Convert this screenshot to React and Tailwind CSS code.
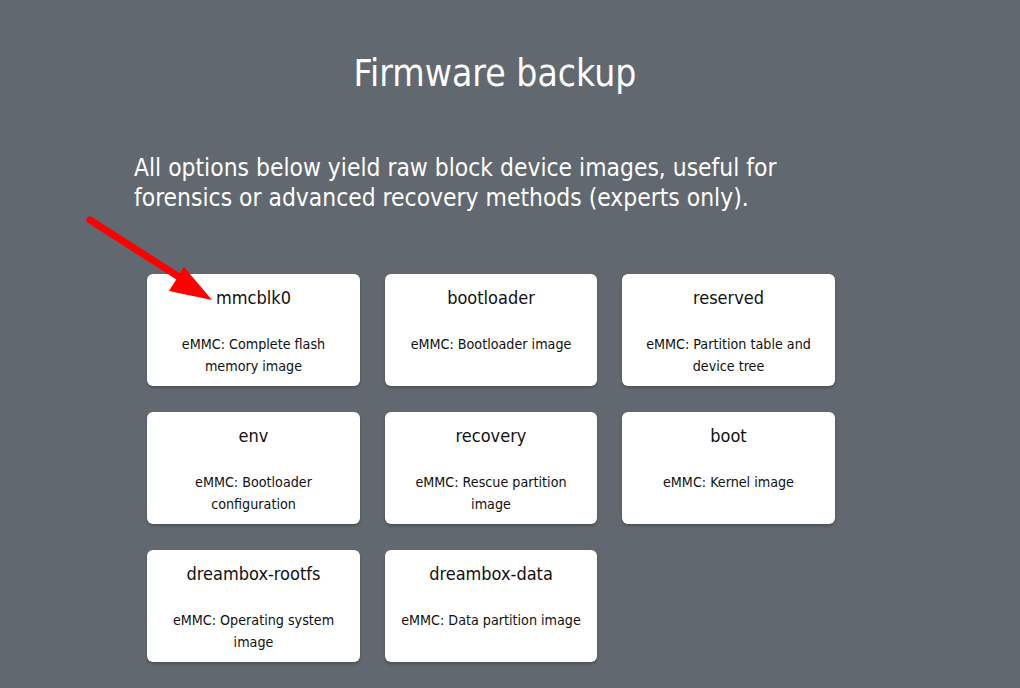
import React from 'react';

const ITEMS = [
    { name: 'mmcblk0', desc: 'eMMC: Complete flash memory image' },
    { name: 'bootloader', desc: 'eMMC: Bootloader image' },
    { name: 'reserved', desc: 'eMMC: Partition table and device tree' },
    { name: 'env', desc: 'eMMC: Bootloader configuration' },
    { name: 'recovery', desc: 'eMMC: Rescue partition image' },
    { name: 'boot', desc: 'eMMC: Kernel image' },
    { name: 'dreambox-rootfs', desc: 'eMMC: Operating system image' },
    { name: 'dreambox-data', desc: 'eMMC: Data partition image' },
];

function Arrow() {
    return (
        <svg className="absolute left-0 top-0 pointer-events-none" width="240" height="320" viewBox="0 0 240 320">
            <line x1="90" y1="220" x2="190" y2="284" stroke="#f00" strokeWidth="7" strokeLinecap="round" />
            <polygon points="212,300 169,291 184,267" fill="#f00" />
        </svg>
    );
}

export default function App() {
    return (
        <div
            className="relative min-h-[688px] w-full bg-[#62686f] text-white"
            style={{ fontFamily: '"DejaVu Sans Condensed", "DejaVu Sans", sans-serif' }}
        >
            <div className="ml-[134px] w-[722px] pt-[52px]">
                {/* Title */}
                <h1 className="text-center text-[37px] leading-[44px] text-white">Firmware backup</h1>

                {/* Intro */}
                <p className="mt-[57px] text-[24.4px] leading-[30px] text-white">
                    All options below yield raw block device images, useful for forensics or advanced recovery methods (experts only).
                </p>

                {/* Partition cards */}
                <div className="ml-[13px] mt-[61px] grid w-[688px] grid-cols-[213px_212px_213px] gap-x-[25px] gap-y-[26px]">
                    {ITEMS.map((item) => (
                        <button
                            key={item.name}
                            className="flex h-[112px] flex-col items-center rounded-[6px] bg-white px-[14px] pt-[13px] text-[#111] shadow-[0_2px_3px_rgba(0,0,0,0.22)]"
                        >
                            <span className="text-[18px] leading-[22px]">{item.name}</span>
                            <span className="mt-[24px] text-center text-[14.2px] leading-[22px]">{item.desc}</span>
                        </button>
                    ))}
                </div>
            </div>
            <Arrow />
        </div>
    );
}
